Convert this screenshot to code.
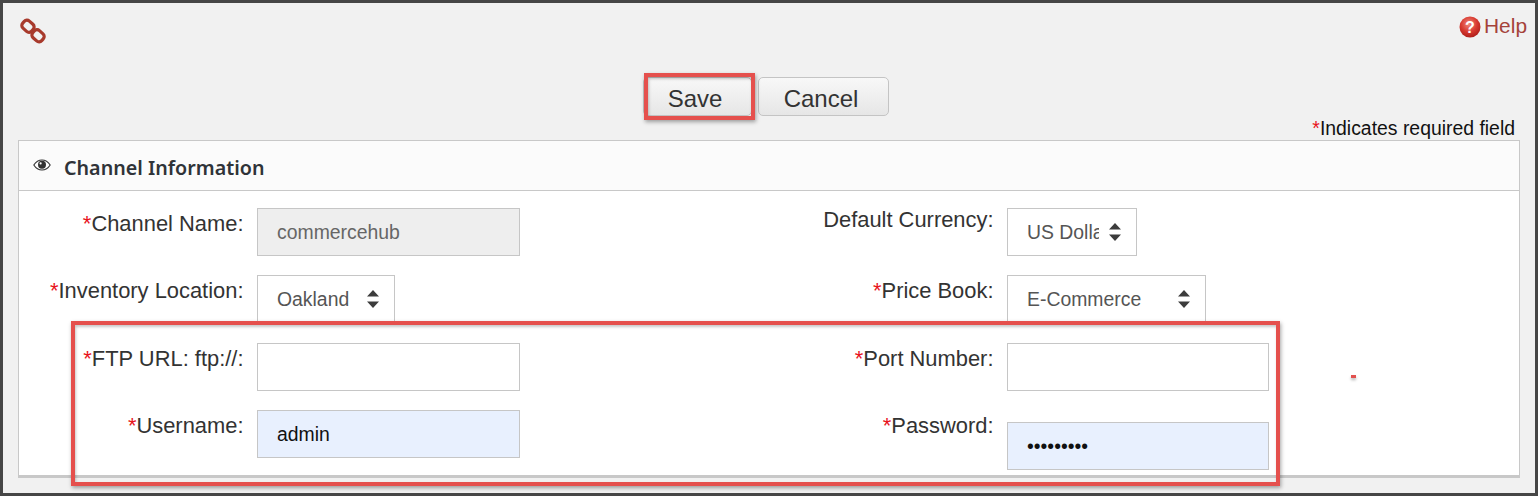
<script>
  const left = 1;
</script>

<div class="page">
  <div class="top">
    <svg class="link" viewBox="0 0 26 26" width="26" height="26" aria-hidden="true">
      <g fill="none" stroke="#a83a2c" stroke-width="3.2">
        <rect x="2" y="3.5" width="12" height="9.5" rx="3.6" transform="rotate(42 8 8.2)" />
        <rect x="12" y="13" width="12" height="9.5" rx="3.6" transform="rotate(42 18 17.8)" />
      </g>
    </svg>
    <a class="help" href="#help">
      <svg viewBox="0 0 22 22" width="22" height="22" aria-hidden="true">
        <defs>
          <radialGradient id="hg" cx="45%" cy="35%" r="70%">
            <stop offset="0" stop-color="#f08a7e" />
            <stop offset="0.55" stop-color="#d8392f" />
            <stop offset="1" stop-color="#a81a16" />
          </radialGradient>
        </defs>
        <circle cx="11" cy="11" r="10.5" fill="url(#hg)" />
        <text x="11" y="17" text-anchor="middle" class="q">?</text>
      </svg>
      <span>Help</span>
    </a>
  </div>

  <div class="actions">
    <button class="btn save" type="button">Save</button>
    <button class="btn cancel" type="button">Cancel</button>
  </div>

  <div class="req"><span class="star">*</span>Indicates required field</div>

  <section class="panel">
    <header class="head">
      <svg viewBox="0 0 18 12" width="18" height="12" aria-hidden="true">
        <path d="M0.8 6C3 2.6 5.8 1 9 1s6 1.6 8.2 5C15 9.4 12.2 11 9 11S3 9.4.8 6z" fill="#fff" stroke="#333" stroke-width="1.1" />
        <circle cx="9" cy="5.8" r="4" fill="#333" />
        <circle cx="7.6" cy="4.4" r="1.1" fill="#fff" />
      </svg>
      <h2>Channel Information</h2>
    </header>

    <div class="form">
      <div class="field">
        <label for="cn"><span class="star">*</span>Channel Name:</label>
        <input id="cn" class="text grey" type="text" value="commercehub" readonly />
      </div>
      <div class="field up">
        <label for="dc">Default Currency:</label>
        <div class="sel w130">
          <select id="dc"><option>US Dollar</option></select>
          <svg class="arrows" viewBox="0 0 12 18" width="12" height="18" aria-hidden="true"><path d="M6 0l6 6.500H0zM6 18l6-6.500H0z" fill="#3c3c3c" /></svg>
        </div>
      </div>

      <div class="field">
        <label for="il"><span class="star">*</span>Inventory Location:</label>
        <div class="sel w138">
          <select id="il"><option>Oakland</option></select>
          <svg class="arrows" viewBox="0 0 12 18" width="12" height="18" aria-hidden="true"><path d="M6 0l6 6.500H0zM6 18l6-6.500H0z" fill="#3c3c3c" /></svg>
        </div>
      </div>
      <div class="field">
        <label for="pb"><span class="star">*</span>Price Book:</label>
        <div class="sel w199">
          <select id="pb"><option>E-Commerce</option></select>
          <svg class="arrows" viewBox="0 0 12 18" width="12" height="18" aria-hidden="true"><path d="M6 0l6 6.500H0zM6 18l6-6.500H0z" fill="#3c3c3c" /></svg>
        </div>
      </div>

      <div class="field lower">
        <label for="ftp"><span class="star">*</span>FTP URL: ftp://:</label>
        <input id="ftp" class="text" type="text" />
      </div>
      <div class="field lower right">
        <label for="port"><span class="star">*</span>Port Number:</label>
        <input id="port" class="text" type="text" />
      </div>

      <div class="field">
        <label for="user"><span class="star">*</span>Username:</label>
        <input id="user" class="text auto" type="text" value="admin" />
      </div>
      <div class="field right">
        <label for="pw"><span class="star">*</span>Password:</label>
        <input id="pw" class="text auto pw" type="password" value="password1" />
      </div>
    </div>
  </section>

  <div class="mark mark-save"></div>
  <div class="mark mark-form"></div>
  <div class="speck"></div>
</div>

<style>
  :global(body) {
    margin: 0;
    background: #f1f1f1;
  }
  .page {
    position: relative;
    box-sizing: border-box;
    width: 1538px;
    height: 496px;
    border: 3px solid #464646;
    padding: 0 15px;
    background: #f1f1f1;
    font-family: "Liberation Sans", Arial, sans-serif;
    color: #333;
    overflow: hidden;
  }
  .top {
    height: 74px;
    display: flex;
    justify-content: space-between;
    align-items: flex-start;
  }
  .link {
    margin: 15px 0 0 2px;
  }
  .help {
    display: flex;
    align-items: center;
    gap: 3px;
    margin: 10px -7px 0 0;
    color: #a5423a;
    font-size: 20.900px;
    line-height: 24px;
    text-decoration: none;
  }
  .help svg {
    margin-top: 3px;
  }
  .q {
    font: bold 16px "Liberation Sans", Arial, sans-serif;
    fill: #fff;
  }
  .actions {
    height: 39px;
    display: flex;
    gap: 6px;
    margin-left: 625px;
  }
  .btn {
    box-sizing: border-box;
    height: 39px;
    border: 1px solid #c4c4c4;
    border-radius: 5px;
    background: linear-gradient(#f8f8f8, #e6e6e6);
    color: #333;
    font: 24px "Liberation Sans", Arial, sans-serif;
    padding: 5px 5px 0 0;
  }
  .save {
    width: 109px;
  }
  .cancel {
    width: 131px;
  }
  .req {
    height: 24px;
    line-height: 24px;
    padding-right: 5px;
    text-align: right;
    font-size: 19.400px;
    color: #111;
  }
  .star {
    color: #e8141c;
  }
  .panel {
    box-sizing: border-box;
    height: 338px;
    border: 1px solid #c8c8c8;
    border-bottom-width: 3px;
    background: #fff;
  }
  .head {
    box-sizing: border-box;
    height: 50px;
    display: flex;
    align-items: center;
    gap: 13px;
    padding: 4px 0 0 14px;
    background: #fbfbfb;
    border-bottom: 1px solid #c8c8c8;
  }
  .head svg {
    margin-top: -5px;
  }
  h2 {
    margin: 0;
    font: 600 19.700px "Noto Sans", "Open Sans", sans-serif;
    color: #2f3338;
  }
  .form {
    display: grid;
    grid-template-columns: 750px 750px;
    row-gap: 19px;
    padding-top: 17px;
  }
  .field {
    display: flex;
    align-items: flex-start;
    gap: 13.500px;
  }
  .lower {
    margin-top: 1px;
  }
  label {
    width: 224.500px;
    flex: none;
    margin-top: 1px;
    text-align: right;
    font-size: 21.900px;
    line-height: 30px;
    color: #333;
  }
  .up label {
    margin-top: -3px;
  }
  .text {
    box-sizing: border-box;
    width: 263px;
    height: 48px;
    border: 1px solid #c6c6c6;
    border-radius: 0;
    padding: 0 19px;
    outline: none;
    background: #fff;
    color: #555;
    font: 19.400px "Liberation Sans", Arial, sans-serif;
  }
  .right .text {
    width: 262px;
  }
  .field .grey {
    background: #eee;
    color: #666;
  }
  .text.auto {
    background: #e8f0fe;
    color: #111;
  }
  .pw {
    margin-top: 12px;
  }
  .sel {
    position: relative;
    box-sizing: border-box;
    height: 48px;
  }
  .w130 {
    width: 130px;
  }
  .w138 {
    width: 138px;
  }
  .w199 {
    width: 199px;
  }
  select {
    appearance: none;
    box-sizing: border-box;
    width: 100%;
    height: 100%;
    border: 1px solid #c6c6c6;
    border-radius: 0;
    padding: 0 37px 0 19px;
    background: #fff;
    color: #555;
    font: 19.400px "Liberation Sans", Arial, sans-serif;
    outline: none;
  }
  .arrows {
    position: absolute;
    right: 16px;
    top: 15px;
    pointer-events: none;
  }
  .mark {
    position: absolute;
    box-sizing: border-box;
    border: 4px solid #e5504d;
    box-shadow: 1px 2px 4px rgba(0, 0, 0, 0.35), inset 1px 2px 3px rgba(0, 0, 0, 0.22);
    pointer-events: none;
  }
  .mark-save {
    left: 641px;
    top: 70px;
    width: 111px;
    height: 47px;
  }
  .mark-form {
    left: 68px;
    top: 318px;
    width: 1209px;
    height: 165px;
  }
  .speck {
    position: absolute;
    left: 1348px;
    top: 372px;
    width: 5px;
    height: 3px;
    background: #e2514f;
    box-shadow: 0 2px 3px rgba(0, 0, 0, 0.3);
  }
</style>
